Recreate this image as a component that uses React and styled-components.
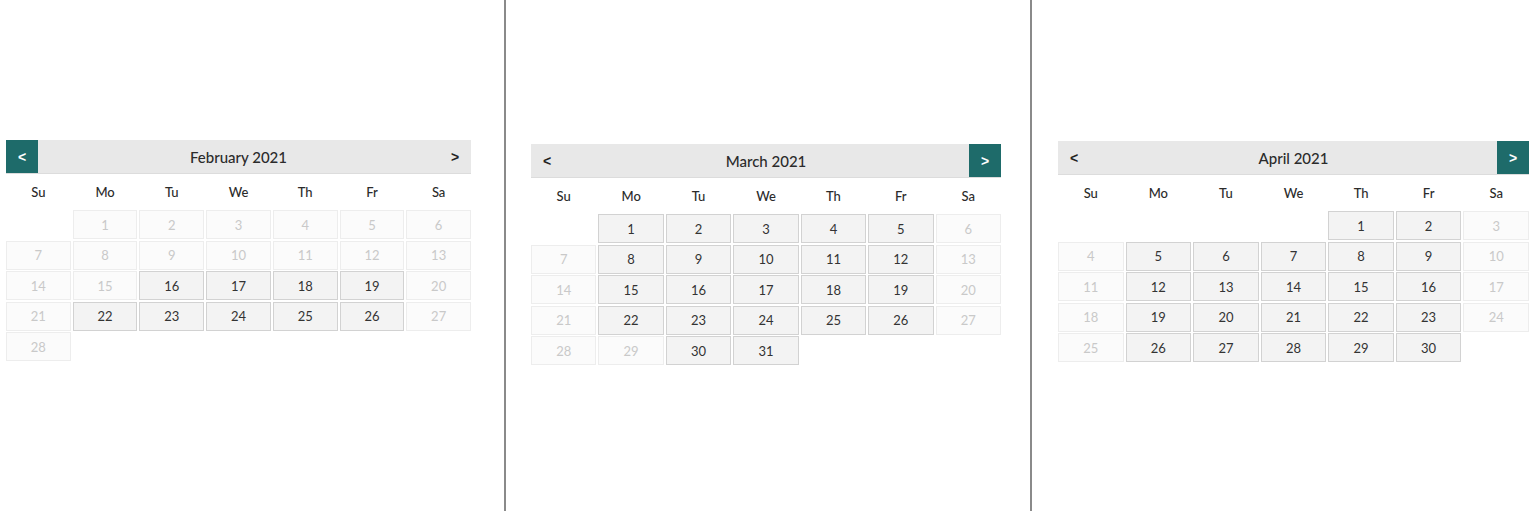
import React from 'react';
import styled, { createGlobalStyle } from 'styled-components';

const GlobalStyle = createGlobalStyle`
  html, body {
    margin: 0;
    padding: 0;
    background: #ffffff;
  }
  body {
    font-family: Lato, "Open Sans", "Liberation Sans", sans-serif;
    color: #333;
  }
`;

const Page = styled.div`
  display: flex;
  width: 1536px;
  height: 511px;
  overflow: hidden;
`;

const Panel = styled.div`
  width: ${(p) => p.$width}px;
  padding-left: ${(p) => p.$left}px;
  padding-top: ${(p) => p.$top}px;
  box-sizing: border-box;
  flex-shrink: 0;
`;

const Divider = styled.div`
  width: 2px;
  height: 511px;
  background: #8a8a8a;
  flex-shrink: 0;
`;

const Calendar = styled.div`
  width: ${(p) => p.$width}px;
`;

const Header = styled.div`
  display: flex;
  align-items: center;
  height: 33px;
  background: #e8e8e8;
  border-bottom: 1px solid #dcdcdc;
`;

const NavButton = styled.div`
  width: 32px;
  height: 33px;
  display: flex;
  align-items: center;
  justify-content: center;
  font-family: "Liberation Sans", Arial, sans-serif;
  font-size: 14px;
  font-weight: 700;
  color: ${(p) => (p.$active ? '#ffffff' : '#222')};
  background: ${(p) => (p.$active ? '#1e6b6a' : 'transparent')};
  flex-shrink: 0;
`;

const Title = styled.div`
  flex: 1;
  text-align: center;
  font-size: 15px;
  font-weight: 500;
  color: #2b2b2b;
`;

const WeekRow = styled.div`
  display: grid;
  grid-template-columns: repeat(7, 1fr);
  column-gap: 2px;
  height: 36px;
  align-items: center;
`;

const WeekDay = styled.div`
  text-align: center;
  font-size: 13px;
  font-weight: 500;
  color: #2b2b2b;
`;

const Grid = styled.div`
  display: grid;
  grid-template-columns: repeat(7, 1fr);
  grid-auto-rows: 29px;
  column-gap: 2px;
  row-gap: 1.5px;
`;

const Cell = styled.div`
  box-sizing: border-box;
  display: flex;
  align-items: center;
  justify-content: center;
  font-size: 13px;
  color: ${(p) => (p.$on ? '#333' : '#c9c9c9')};
  background: ${(p) => (p.$on ? '#f3f3f3' : '#fbfbfb')};
  border: 1px solid ${(p) => (p.$on ? '#d2d2d2' : '#ededed')};
`;

const Blank = styled.div``;

const DAYS = ['Su', 'Mo', 'Tu', 'We', 'Th', 'Fr', 'Sa'];

const months = [
  {
    title: 'February 2021',
    start: 1,
    length: 28,
    open: [16, 17, 18, 19, 22, 23, 24, 25, 26],
    prevActive: true,
    panel: { width: 504, left: 6, top: 140 },
    calWidth: 465,
  },
  {
    title: 'March 2021',
    start: 1,
    length: 31,
    open: [1, 2, 3, 4, 5, 8, 9, 10, 11, 12, 15, 16, 17, 18, 19, 22, 23, 24, 25, 26, 30, 31],
    nextActive: true,
    panel: { width: 524, left: 25, top: 144 },
    calWidth: 470,
  },
  {
    title: 'April 2021',
    start: 4,
    length: 30,
    open: [1, 2, 5, 6, 7, 8, 9, 12, 13, 14, 15, 16, 19, 20, 21, 22, 23, 26, 27, 28, 29, 30],
    nextActive: true,
    panel: { width: 504, left: 26, top: 141 },
    calWidth: 471,
  },
];

const Month = ({ m }) => {
  const cells = [];
  for (let i = 0; i < m.start; i++) cells.push(<Blank key={'b' + i} />);
  for (let d = 1; d <= m.length; d++) {
    cells.push(
      <Cell key={d} $on={m.open.includes(d)}>
        {d}
      </Cell>
    );
  }
  return (
    <Calendar $width={m.calWidth}>
      <Header>
        <NavButton $active={m.prevActive}>&lt;</NavButton>
        <Title>{m.title}</Title>
        <NavButton $active={m.nextActive}>&gt;</NavButton>
      </Header>
      <WeekRow>
        {DAYS.map((d) => (
          <WeekDay key={d}>{d}</WeekDay>
        ))}
      </WeekRow>
      <Grid>{cells}</Grid>
    </Calendar>
  );
};

const App = () => (
  <>
    <GlobalStyle />
    <Page>
      <Panel $width={months[0].panel.width} $left={months[0].panel.left} $top={months[0].panel.top}>
        <Month m={months[0]} />
      </Panel>
      <Divider />
      <Panel $width={months[1].panel.width} $left={months[1].panel.left} $top={months[1].panel.top}>
        <Month m={months[1]} />
      </Panel>
      <Divider />
      <Panel $width={months[2].panel.width} $left={months[2].panel.left} $top={months[2].panel.top}>
        <Month m={months[2]} />
      </Panel>
    </Page>
  </>
);

export default App;
